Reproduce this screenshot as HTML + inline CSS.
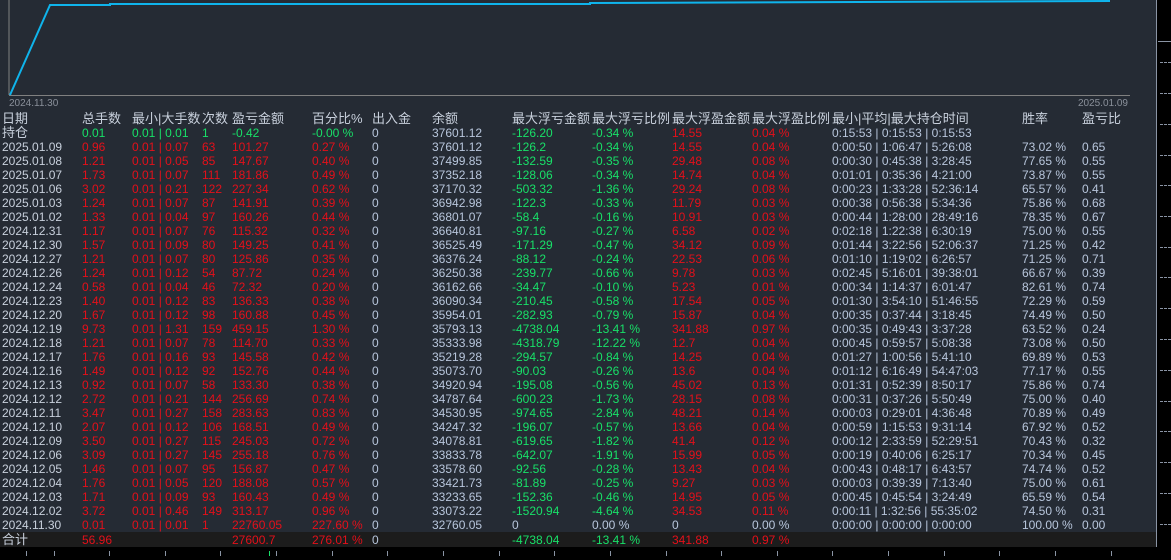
<!DOCTYPE html>
<html><head><meta charset="utf-8"><style>
*{margin:0;padding:0;box-sizing:border-box}
body{width:1171px;height:560px;background:#000;position:relative;overflow:hidden;font-family:"Liberation Sans","Noto Sans CJK SC",sans-serif;font-size:12px;color:#c4ccd8}
#panel{position:absolute;left:0;top:0;width:1157px;height:547px;background:#252b34;border-right:1px solid #8a94a4;border-bottom:1px solid #8a94a4}
.r{position:absolute;left:0;width:1156px;height:14px;line-height:14px;white-space:nowrap}
.r span{position:absolute;top:0}
.a{left:2px}.b{left:82px}.c{left:132px}.d{left:202px}.e{left:232px}.f{left:312px}.g{left:372px}.h{left:432px}.i{left:512px}.j{left:592px}.k{left:672px}.l{left:752px}.m{left:832px}.n{left:1022px}.o{left:1082px}
.R{color:#e4101a}.G{color:#18e068}.B{color:#b8c6dc}
.hd{font-size:13px;color:#c8d0dc}
.tick{position:absolute;left:1160px;width:11px;height:1px;border-top:1px dashed #8a94a4}
.bt{position:absolute;top:551px;width:1px;height:5px;background:#8a94a4}
</style></head><body>
<div id="panel">
<svg width="1157" height="110" style="position:absolute;left:0;top:0">
<line x1="9" y1="0" x2="9" y2="95" stroke="#808080"/>
<line x1="9" y1="95.5" x2="1130" y2="95.5" stroke="#808080"/>
<polyline points="10,95 50,5 110,5 110,4 590,4 590,3 1110,1" fill="none" stroke="#0fb4ec" stroke-width="2"/>
<text x="9" y="106" font-size="10" fill="#8a909a" font-family="Liberation Sans">2024.11.30</text>
<text x="1128" y="106" font-size="10" fill="#8a909a" text-anchor="end" font-family="Liberation Sans">2025.01.09</text>
</svg>
<div class="r hd" style="top:112px"><span class="a">日期</span><span class="b">总手数</span><span class="c">最小|大手数</span><span class="d">次数</span><span class="e">盈亏金额</span><span class="f">百分比%</span><span class="g">出入金</span><span class="h">余额</span><span class="i">最大浮亏金额</span><span class="j">最大浮亏比例</span><span class="k">最大浮盈金额</span><span class="l">最大浮盈比例</span><span class="m">最小|平均|最大持仓时间</span><span class="n">胜率</span><span class="o">盈亏比</span></div>
<div class="r" style="top:126px"><span class="a hd">持仓</span><span class="b G">0.01</span><span class="c G">0.01 | 0.01</span><span class="d G">1</span><span class="e G">-0.42</span><span class="f G">-0.00 %</span><span class="g B">0</span><span class="h B">37601.12</span><span class="i G">-126.20</span><span class="j G">-0.34 %</span><span class="k R">14.55</span><span class="l R">0.04 %</span><span class="m B">0:15:53 | 0:15:53 | 0:15:53</span></div>
<div id="rows"></div>
<div style="position:absolute;left:0;top:532px;width:1156px;height:15px;background:#1c1c1c"></div>
<div class="r" style="top:533px"><span class="a hd">合计</span><span class="b R">56.96</span><span class="e R">27600.7</span><span class="f R">276.01 %</span><span class="g B">0</span><span class="i G">-4738.04</span><span class="j G">-13.41 %</span><span class="k R">341.88</span><span class="l R">0.97 %</span></div>
</div>
<div style="position:absolute;left:1158px;top:41px;width:13px;height:1px;background:#8a94a4"></div>
<div class="tick" style="top:62px"></div><div class="tick" style="top:93px"></div><div class="tick" style="top:124px"></div><div class="tick" style="top:155px"></div><div class="tick" style="top:185px"></div><div class="tick" style="top:216px"></div><div class="tick" style="top:247px"></div><div class="tick" style="top:277px"></div><div class="tick" style="top:308px"></div><div class="tick" style="top:339px"></div><div class="tick" style="top:370px"></div><div class="tick" style="top:401px"></div><div class="tick" style="top:431px"></div><div class="tick" style="top:462px"></div><div class="tick" style="top:493px"></div><div class="tick" style="top:524px"></div>
<div class="bt" style="left:26px"></div><div class="bt" style="left:54px"></div><div class="bt" style="left:109px"></div><div class="bt" style="left:165px"></div><div class="bt" style="left:220px"></div><div class="bt" style="left:276px"></div><div class="bt" style="left:332px"></div><div class="bt" style="left:387px"></div><div class="bt" style="left:443px"></div><div class="bt" style="left:499px"></div><div class="bt" style="left:554px"></div><div class="bt" style="left:610px"></div><div class="bt" style="left:666px"></div><div class="bt" style="left:721px"></div><div class="bt" style="left:777px"></div><div class="bt" style="left:832px"></div><div class="bt" style="left:888px"></div><div class="bt" style="left:944px"></div><div class="bt" style="left:999px"></div><div class="bt" style="left:1055px"></div><div class="bt" style="left:1111px"></div>
<div class="bt" style="left:269px;background:#18e068"></div>
<script>
var d=[
["2025.01.09","0.96","0.01 | 0.07","63","101.27","0.27 %","37601.12","-126.2","-0.34 %","14.55","0.04 %","0:00:50 | 1:06:47 | 5:26:08","73.02 %","0.65"],
["2025.01.08","1.21","0.01 | 0.05","85","147.67","0.40 %","37499.85","-132.59","-0.35 %","29.48","0.08 %","0:00:30 | 0:45:38 | 3:28:45","77.65 %","0.55"],
["2025.01.07","1.73","0.01 | 0.07","111","181.86","0.49 %","37352.18","-128.06","-0.34 %","14.74","0.04 %","0:01:01 | 0:35:36 | 4:21:00","73.87 %","0.55"],
["2025.01.06","3.02","0.01 | 0.21","122","227.34","0.62 %","37170.32","-503.32","-1.36 %","29.24","0.08 %","0:00:23 | 1:33:28 | 52:36:14","65.57 %","0.41"],
["2025.01.03","1.24","0.01 | 0.07","87","141.91","0.39 %","36942.98","-122.3","-0.33 %","11.79","0.03 %","0:00:38 | 0:56:38 | 5:34:36","75.86 %","0.68"],
["2025.01.02","1.33","0.01 | 0.04","97","160.26","0.44 %","36801.07","-58.4","-0.16 %","10.91","0.03 %","0:00:44 | 1:28:00 | 28:49:16","78.35 %","0.67"],
["2024.12.31","1.17","0.01 | 0.07","76","115.32","0.32 %","36640.81","-97.16","-0.27 %","6.58","0.02 %","0:02:18 | 1:22:38 | 6:30:19","75.00 %","0.55"],
["2024.12.30","1.57","0.01 | 0.09","80","149.25","0.41 %","36525.49","-171.29","-0.47 %","34.12","0.09 %","0:01:44 | 3:22:56 | 52:06:37","71.25 %","0.42"],
["2024.12.27","1.21","0.01 | 0.07","80","125.86","0.35 %","36376.24","-88.12","-0.24 %","22.53","0.06 %","0:01:10 | 1:19:02 | 6:26:57","71.25 %","0.71"],
["2024.12.26","1.24","0.01 | 0.12","54","87.72","0.24 %","36250.38","-239.77","-0.66 %","9.78","0.03 %","0:02:45 | 5:16:01 | 39:38:01","66.67 %","0.39"],
["2024.12.24","0.58","0.01 | 0.04","46","72.32","0.20 %","36162.66","-34.47","-0.10 %","5.23","0.01 %","0:00:34 | 1:14:37 | 6:01:47","82.61 %","0.74"],
["2024.12.23","1.40","0.01 | 0.12","83","136.33","0.38 %","36090.34","-210.45","-0.58 %","17.54","0.05 %","0:01:30 | 3:54:10 | 51:46:55","72.29 %","0.59"],
["2024.12.20","1.67","0.01 | 0.12","98","160.88","0.45 %","35954.01","-282.93","-0.79 %","15.87","0.04 %","0:00:35 | 0:37:44 | 3:18:45","74.49 %","0.50"],
["2024.12.19","9.73","0.01 | 1.31","159","459.15","1.30 %","35793.13","-4738.04","-13.41 %","341.88","0.97 %","0:00:35 | 0:49:43 | 3:37:28","63.52 %","0.24"],
["2024.12.18","1.21","0.01 | 0.07","78","114.70","0.33 %","35333.98","-4318.79","-12.22 %","12.7","0.04 %","0:00:45 | 0:59:57 | 5:08:38","73.08 %","0.50"],
["2024.12.17","1.76","0.01 | 0.16","93","145.58","0.42 %","35219.28","-294.57","-0.84 %","14.25","0.04 %","0:01:27 | 1:00:56 | 5:41:10","69.89 %","0.53"],
["2024.12.16","1.49","0.01 | 0.12","92","152.76","0.44 %","35073.70","-90.03","-0.26 %","13.6","0.04 %","0:01:12 | 6:16:49 | 54:47:03","77.17 %","0.55"],
["2024.12.13","0.92","0.01 | 0.07","58","133.30","0.38 %","34920.94","-195.08","-0.56 %","45.02","0.13 %","0:01:31 | 0:52:39 | 8:50:17","75.86 %","0.74"],
["2024.12.12","2.72","0.01 | 0.21","144","256.69","0.74 %","34787.64","-600.23","-1.73 %","28.15","0.08 %","0:00:31 | 0:37:26 | 5:50:49","75.00 %","0.40"],
["2024.12.11","3.47","0.01 | 0.27","158","283.63","0.83 %","34530.95","-974.65","-2.84 %","48.21","0.14 %","0:00:03 | 0:29:01 | 4:36:48","70.89 %","0.49"],
["2024.12.10","2.07","0.01 | 0.12","106","168.51","0.49 %","34247.32","-196.07","-0.57 %","13.66","0.04 %","0:00:59 | 1:15:53 | 9:31:14","67.92 %","0.52"],
["2024.12.09","3.50","0.01 | 0.27","115","245.03","0.72 %","34078.81","-619.65","-1.82 %","41.4","0.12 %","0:00:12 | 2:33:59 | 52:29:51","70.43 %","0.32"],
["2024.12.06","3.09","0.01 | 0.27","145","255.18","0.76 %","33833.78","-642.07","-1.91 %","15.99","0.05 %","0:00:19 | 0:40:06 | 6:25:17","70.34 %","0.45"],
["2024.12.05","1.46","0.01 | 0.07","95","156.87","0.47 %","33578.60","-92.56","-0.28 %","13.43","0.04 %","0:00:43 | 0:48:17 | 6:43:57","74.74 %","0.52"],
["2024.12.04","1.76","0.01 | 0.05","120","188.08","0.57 %","33421.73","-81.89","-0.25 %","9.27","0.03 %","0:00:03 | 0:39:39 | 7:13:40","75.00 %","0.61"],
["2024.12.03","1.71","0.01 | 0.09","93","160.43","0.49 %","33233.65","-152.36","-0.46 %","14.95","0.05 %","0:00:45 | 0:45:54 | 3:24:49","65.59 %","0.54"],
["2024.12.02","3.72","0.01 | 0.46","149","313.17","0.96 %","33073.22","-1520.94","-4.64 %","34.53","0.11 %","0:00:11 | 1:32:56 | 55:35:02","74.50 %","0.31"],
["2024.11.30","0.01","0.01 | 0.01","1","22760.05","227.60 %","32760.05","0","0.00 %","0","0.00 %","0:00:00 | 0:00:00 | 0:00:00","100.00 %","0.00"]];
var h="",c="abcdefhijklmno";
d.forEach(function(r,n){
var last=n==d.length-1;
var cls=["hd","R","R","R","R","R","B",last?"B":"G",last?"B":"G",last?"B":"R",last?"B":"R","B","B","B"];
h+='<div class="r" style="top:'+(140+n*14)+'px">';
r.forEach(function(v,k){h+='<span class="'+c[k]+' '+cls[k]+'"'+(k==0?' style="font-size:12px"':'')+'>'+v+'</span>';if(k==5)h+='<span class="g B">0</span>';});
h+='</div>';});
document.getElementById("rows").innerHTML=h;
</script>
</body></html>
